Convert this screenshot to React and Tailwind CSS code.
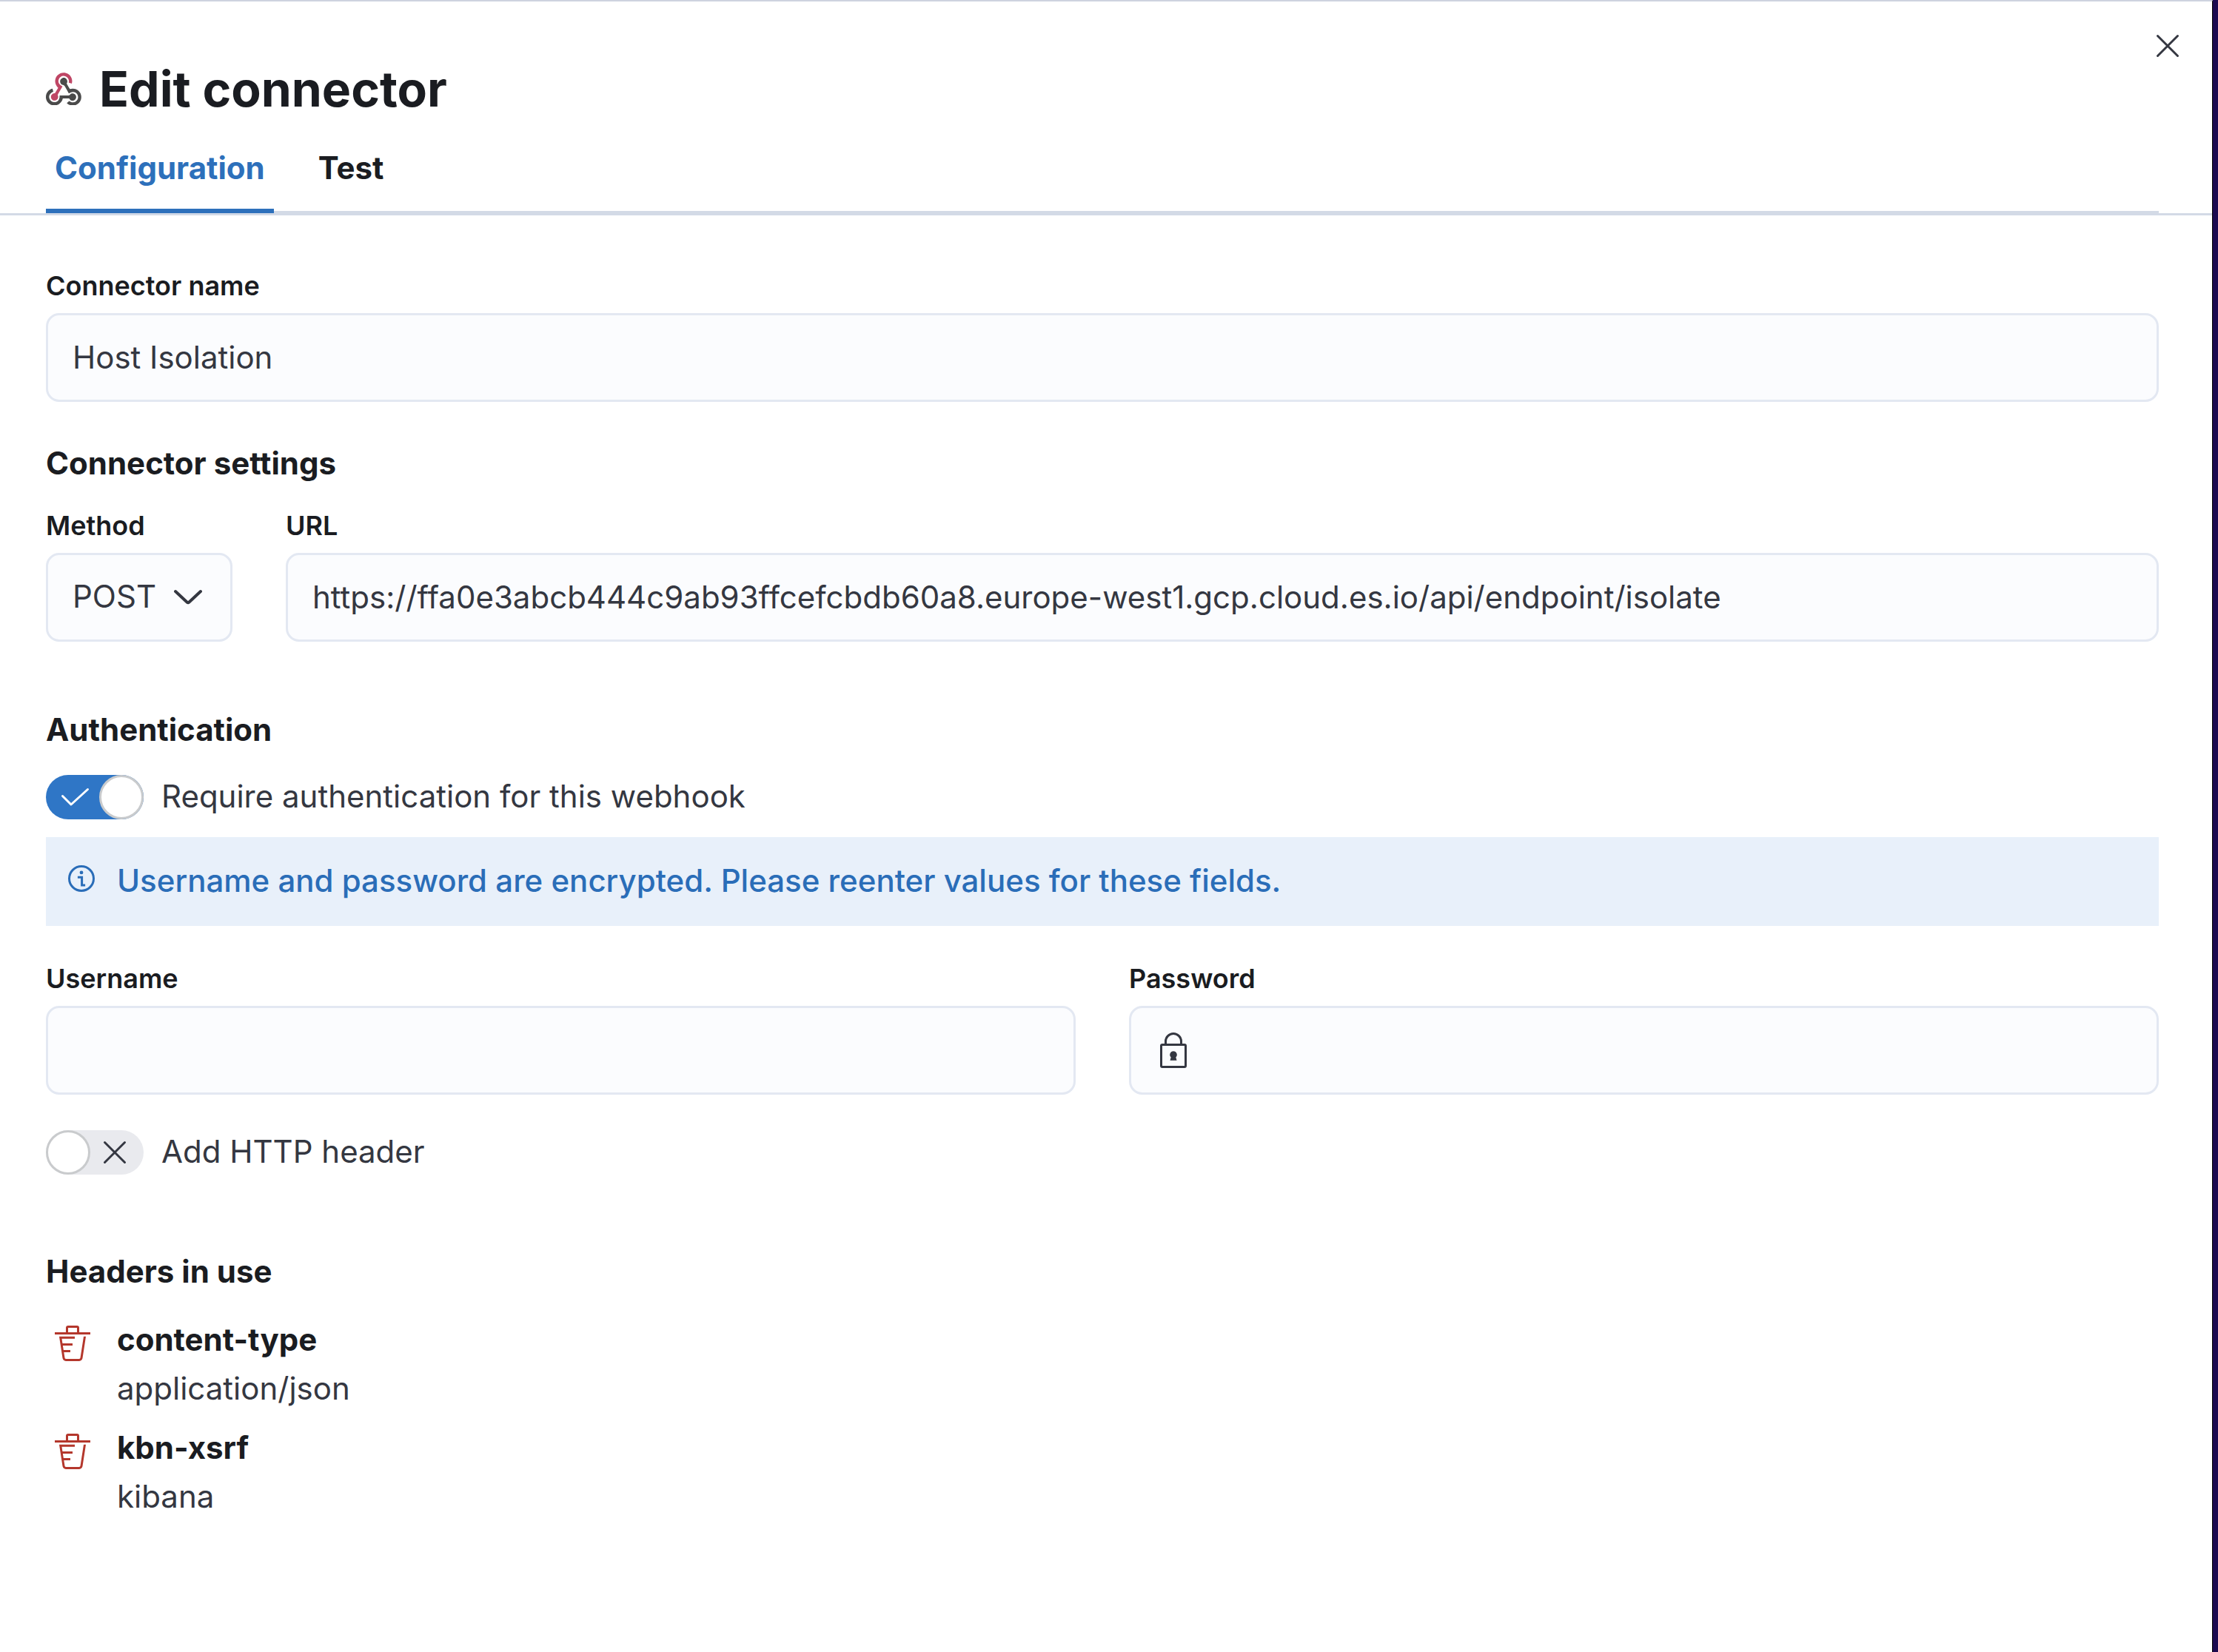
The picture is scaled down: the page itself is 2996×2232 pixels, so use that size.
import React from "react";

const labelClass = "mb-3 block text-[36px] leading-[50px] font-semibold text-[#1a1c21]";
const fieldClass =
  "h-[120px] w-full rounded-[18px] border-[3px] border-[#e3e8f2] bg-[#fbfcfe] pb-0.5 text-[42px] leading-[72px] text-[#343741] outline-none focus:border-[#2f76c6]";
const sectionTitleClass = "text-[42px] leading-[70px] font-bold text-[#1a1c21]";

function WebhookLogo() {
  return (
    <svg className="w-12" viewBox="0 0 256 239" aria-hidden="true">
      <path
        fill="#bf4665"
        d="M119.54 100.503c-10.61 17.836-20.775 35.108-31.152 52.25-2.665 4.401-3.984 7.986-1.855 13.58 5.878 15.454-2.414 30.493-17.998 34.575-14.697 3.851-29.016-5.808-31.932-21.543-2.584-13.927 8.224-27.58 23.58-29.757 1.286-.184 2.6-.205 4.762-.367l23.358-39.168C73.612 95.465 64.868 78.39 66.803 57.23c1.368-14.957 7.25-27.883 18-38.477 20.59-20.288 52.002-23.573 76.246-8.001 23.284 14.958 33.948 44.094 24.858 69.031-6.854-1.858-13.756-3.732-21.343-5.79 2.854-13.865.743-26.315-8.608-36.981-6.178-7.042-14.106-10.733-23.12-12.093-18.072-2.73-35.815 8.88-41.08 26.618-5.976 20.13 3.069 36.575 27.784 48.967z"
      />
      <path
        fill="#4b4b4b"
        d="M149.841 79.41c7.475 13.187 15.065 26.573 22.587 39.836 38.02-11.763 66.686 9.284 76.97 31.817 12.422 27.219 3.93 59.457-20.465 76.25-25.04 17.238-56.707 14.293-78.892-7.851 5.654-4.733 11.336-9.487 17.407-14.566 21.912 14.192 41.077 13.524 55.305-3.282 12.133-14.337 11.87-35.714-.615-49.75-14.408-16.197-33.707-16.691-57.035-1.143-9.677-17.168-19.522-34.199-28.893-51.491-3.16-5.828-6.648-9.21-13.77-10.443-11.893-2.062-19.571-12.275-20.032-23.717-.453-11.316 6.214-21.545 16.634-25.53 10.322-3.949 22.435-.762 29.378 8.014 5.674 7.17 7.477 15.24 4.491 24.083-.83 2.466-1.905 4.852-3.07 7.774z"
      />
      <path
        fill="#4a4a4a"
        d="M167.707 187.21h-45.77c-4.387 18.044-13.863 32.612-30.19 41.876-12.693 7.2-26.373 9.641-40.933 7.29-26.808-4.323-48.728-28.456-50.658-55.63-2.184-30.784 18.975-58.147 47.178-64.293 1.947 7.071 3.915 14.21 5.862 21.264-25.876 13.202-34.832 29.836-27.59 50.636 6.375 18.304 24.484 28.337 44.147 24.457 20.08-3.962 30.204-20.65 28.968-47.432 19.036 0 38.088-.197 57.126.097 7.434.117 13.173-.654 18.773-7.208 9.22-10.784 26.191-9.811 36.121.374 10.148 10.409 9.662 27.157-1.077 37.127-10.361 9.62-26.73 9.106-36.424-1.26-1.992-2.136-3.562-4.673-5.533-7.298z"
      />
    </svg>
  );
}

function CrossIcon({ className }) {
  return (
    <svg className={className} viewBox="0 0 16 16" fill="none" stroke="currentColor" strokeLinecap="round" aria-hidden="true">
      <path d="M3.5 3.5l9 9M12.5 3.5l-9 9" />
    </svg>
  );
}

function TrashIcon() {
  return (
    <svg className="size-12" viewBox="0 0 16 16" fill="currentColor" aria-hidden="true">
      <path d="M11 3h5v1H0V3h5V1a1 1 0 0 1 1-1h4a1 1 0 0 1 1 1v2Zm-7.056 8H7v1H4.1l.392 2.519c.042.269.254.458.493.458h6.03c.239 0 .451-.189.493-.458l1.498-9.576H14l-1.504 9.73c-.116.747-.74 1.304-1.481 1.304h-6.03c-.741 0-1.365-.557-1.481-1.304l-1.511-9.73H9V5.95H3.157L3.476 8H8v1H3.632l.312 2ZM6 3h4V1H6v2Z" />
    </svg>
  );
}

function InfoIcon() {
  return (
    <svg className="mt-2 size-12 shrink-0" viewBox="0 0 16 16" fill="none" stroke="currentColor" aria-hidden="true">
      <circle cx="8" cy="8" r="5.5" />
      <path d="M6.3 7.450H8.200V11H9.700" />
      <circle cx="8" cy="5.3" r="0.8" fill="currentColor" stroke="none" />
    </svg>
  );
}

function LockIcon() {
  return (
    <svg className="pointer-events-none absolute top-9 left-9 size-12 text-[#343741]" viewBox="0 0 16 16" fill="none" stroke="currentColor" aria-hidden="true">
      <path d="M4.5 5.5V4a3.5 3.5 0 0 1 7 0v1.5" />
      <rect x="2.5" y="5.5" width="11" height="10" rx="0.5" />
      <path d="M8 8.4a1.6 1.6 0 0 1 1.1 2.75l.4 1.45h-3l.4-1.45A1.6 1.6 0 0 1 8 8.4Z" fill="currentColor" stroke="none" />
    </svg>
  );
}

function Switch({ id, label, defaultChecked }) {
  return (
    <div className="flex items-start gap-6">
      <span className="relative flex">
        <input
          id={id}
          type="checkbox"
          role="switch"
          defaultChecked={defaultChecked}
          className="peer h-[60px] w-[132px] appearance-none rounded-full bg-[#e9eaee] checked:bg-[#2f76c6]"
        />
        <span className="pointer-events-none absolute top-0 left-0 size-[60px] rounded-full border-[3px] border-[#c9cbcd] bg-white peer-checked:left-[72px]" />
        <svg
          className="pointer-events-none absolute top-[9px] left-[18px] hidden size-[42px] text-white peer-checked:block"
          viewBox="0 0 42 42"
          fill="none"
          stroke="currentColor"
          strokeWidth="3"
          strokeLinecap="round"
          strokeLinejoin="round"
          aria-hidden="true"
        >
          <path d="M4.500 19.500L16 31L38.500 10.500" />
        </svg>
        <CrossIcon className="pointer-events-none absolute top-1.5 left-[69px] size-12 text-[#343741] peer-checked:hidden" />
      </span>
      <label htmlFor={id} className="text-[42px] leading-[58px]">
        {label}
      </label>
    </div>
  );
}

const headers = [
  { name: "content-type", value: "application/json" },
  { name: "kbn-xsrf", value: "kibana" },
];

export default function App() {
  return (
    <div className="flex min-h-screen bg-[#1c0a50] pr-[7px] font-[Inter,sans-serif] text-[#343741] [font-optical-sizing:none]">
      <main className="relative min-w-0 flex-1 border-t-2 border-r border-t-[#ced3df] border-r-black bg-white">
        <button type="button" aria-label="Close" className="absolute top-[36px] right-[36px]">
          <CrossIcon className="size-12" />
        </button>

        <header className="border-b-[3px] border-[#d3dae6] pt-[70px] pr-[72px] pl-[62px]">
          <div className="flex items-center gap-6">
            <WebhookLogo />
            <h1 className="text-[66px] leading-[96px] font-bold text-[#1a1c21]">Edit connector</h1>
          </div>
          <div role="tablist" className="flex gap-12 shadow-[inset_0_-3px_0_#d3dae6]">
            <button
              type="button"
              role="tab"
              aria-selected="true"
              className="h-[120px] px-3 pb-0.5 text-[42px] leading-[72px] font-bold text-[#2d70bb] shadow-[inset_0_-6px_0_#2d70bb]"
            >
              Configuration
            </button>
            <button type="button" role="tab" aria-selected="false" className="h-[120px] px-3 pb-0.5 text-[42px] leading-[72px] font-bold text-[#1a1c21]">
              Test
            </button>
          </div>
        </header>

        <form className="pt-[70px] pr-[72px] pb-24 pl-[62px]" onSubmit={(e) => e.preventDefault()}>
          <label htmlFor="name" className={labelClass}>
            Connector name
          </label>
          <input id="name" type="text" defaultValue="Host Isolation" className={`${fieldClass} px-[33px]`} />

          <h2 className={`${sectionTitleClass} mt-12`}>Connector settings</h2>
          <div className="mt-6 flex gap-[72px]">
            <div className="w-[252px]">
              <label htmlFor="method" className={labelClass}>
                Method
              </label>
              <div className="relative">
                <select id="method" defaultValue="POST" className={`${fieldClass} appearance-none px-[33px]`}>
                  <option>POST</option>
                  <option>PUT</option>
                </select>
                <svg
                  className="pointer-events-none absolute top-9 right-9 size-12"
                  viewBox="0 0 48 48"
                  fill="none"
                  stroke="currentColor"
                  strokeWidth="4"
                  strokeLinecap="round"
                  strokeLinejoin="round"
                  aria-hidden="true"
                >
                  <path d="M7 16L22.500 30.500Q24 32 25.500 30.500L41 16" />
                </svg>
              </div>
            </div>
            <div className="flex-1">
              <label htmlFor="url" className={labelClass}>
                URL
              </label>
              <input
                id="url"
                type="text"
                defaultValue="https://ffa0e3abcb444c9ab93ffcefcbdb60a8.europe-west1.gcp.cloud.es.io/api/endpoint/isolate"
                className={`${fieldClass} px-[33px]`}
              />
            </div>
          </div>

          <h2 className={`${sectionTitleClass} mt-[84px] mb-[26px]`}>Authentication</h2>
          <Switch id="auth" label="Require authentication for this webhook" defaultChecked />

          <div className="mt-6 flex gap-6 bg-[#e8f0fa] px-6 pt-6 pb-[26px] text-[#2a6db8]">
            <InfoIcon />
            <p className="text-[42px] leading-[70px] font-medium">
              Username and password are encrypted. Please reenter values for these fields.
            </p>
          </div>

          <div className="mt-[46px] grid grid-cols-2 gap-[72px]">
            <div>
              <label htmlFor="username" className={labelClass}>
                Username
              </label>
              <input id="username" type="text" className={`${fieldClass} px-[33px]`} />
            </div>
            <div>
              <label htmlFor="password" className={labelClass}>
                Password
              </label>
              <div className="relative">
                <input id="password" type="password" className={`${fieldClass} pr-[33px] pl-[105px]`} />
                <LockIcon />
              </div>
            </div>
          </div>

          <div className="mt-12">
            <Switch id="add-header" label="Add HTTP header" />
          </div>

          <h2 className={`${sectionTitleClass} mt-24 mb-[26px]`}>Headers in use</h2>
          <ul className="flex flex-col gap-3.5">
            {headers.map((h) => (
              <li key={h.name} className="flex items-start gap-6">
                <button type="button" aria-label={`Delete ${h.name}`} className="p-3 text-[#b4372c]">
                  <TrashIcon />
                </button>
                <dl className="text-[42px]">
                  <dt className="leading-[62px] font-bold text-[#1a1c21]">{h.name}</dt>
                  <dd className="leading-[70px]">{h.value}</dd>
                </dl>
              </li>
            ))}
          </ul>
        </form>
      </main>
    </div>
  );
}
